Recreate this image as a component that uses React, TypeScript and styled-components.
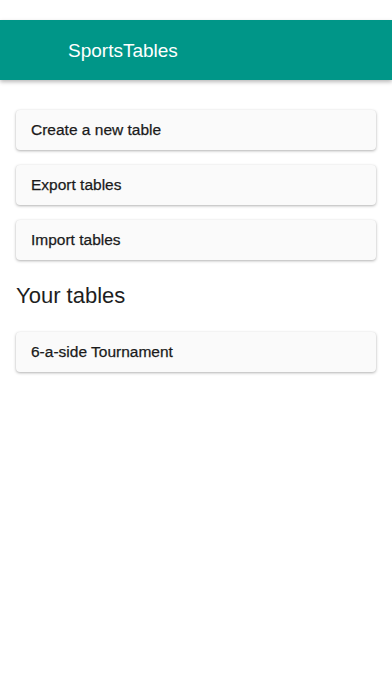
import React from "react";
import styled, { createGlobalStyle } from "styled-components";

const Global = createGlobalStyle`
  html, body { margin: 0; padding: 0; background: #ffffff; }
  body { font-family: "Liberation Sans", Arial, sans-serif; -webkit-font-smoothing: antialiased; }
  * { box-sizing: border-box; }
`;

const Page = styled.div`
  width: 392px;
  min-height: 696px;
  background: #ffffff;
  display: flex;
  flex-direction: column;
`;

const StatusBar = styled.div`
  height: 20px;
  background: #ffffff;
`;

const Header = styled.header`
  height: 60px;
  background: #009688;
  display: flex;
  align-items: center;
  padding-left: 68px;
  box-shadow: 0 2px 4px rgba(0, 0, 0, 0.28);
  position: relative;
  z-index: 1;
`;

const Title = styled.h1`
  margin: 0;
  font-size: 19px;
  font-weight: 400;
  color: #ffffff;
  line-height: 1;
`;

const Content = styled.main`
  display: flex;
  flex-direction: column;
  padding: 30px 16px 0 16px;
`;

const CardList = styled.div`
  display: flex;
  flex-direction: column;
  gap: 15px;
`;

const Card = styled.div`
  height: 40px;
  background: #fafafa;
  border-radius: 4px;
  box-shadow: 0 1px 3px rgba(0, 0, 0, 0.3), 0 0 1px rgba(0, 0, 0, 0.08);
  display: flex;
  align-items: center;
  padding-left: 15px;
  font-size: 15.5px;
  color: #1a1a1a;
  -webkit-text-stroke: 0.25px #1a1a1a;
`;

const SectionTitle = styled.h2`
  margin: 23px 0 23px 0;
  font-size: 22px;
  font-weight: 400;
  line-height: 26px;
  color: #1e1e1e;
`;

export default function App() {
  return (
    <Page>
      <Global />
      <StatusBar />
      <Header>
        <Title>SportsTables</Title>
      </Header>
      <Content>
        <CardList>
          <Card>Create a new table</Card>
          <Card>Export tables</Card>
          <Card>Import tables</Card>
        </CardList>
        <SectionTitle>Your tables</SectionTitle>
        <CardList>
          <Card>6-a-side Tournament</Card>
        </CardList>
      </Content>
    </Page>
  );
}
